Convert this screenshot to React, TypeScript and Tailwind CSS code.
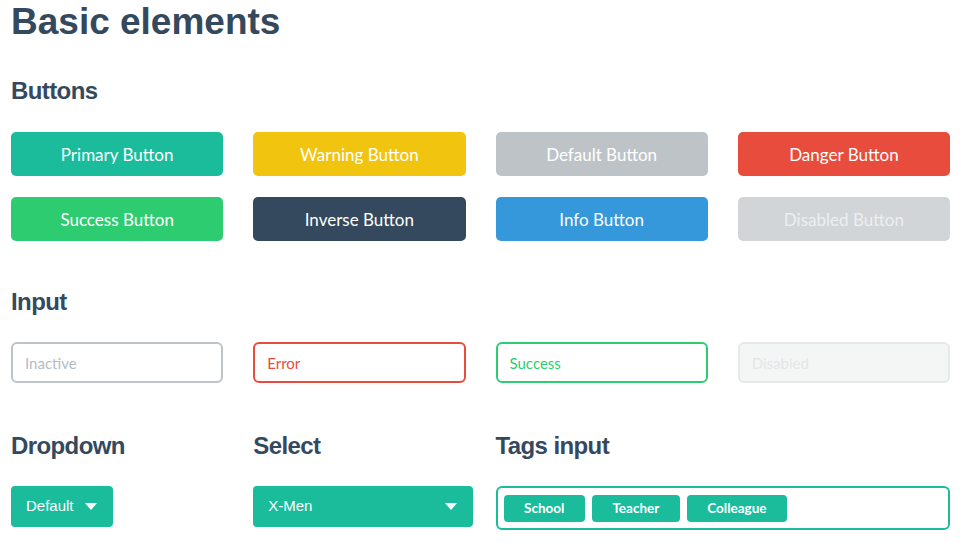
const heading = "font-['Liberation_Sans',Arial,sans-serif] font-bold text-[#34495e] leading-none";

const buttons = [
  { label: 'Primary Button', cls: 'bg-[#1abc9c] text-white' },
  { label: 'Warning Button', cls: 'bg-[#f1c40f] text-white' },
  { label: 'Default Button', cls: 'bg-[#bdc3c7] text-white' },
  { label: 'Danger Button', cls: 'bg-[#e74c3c] text-white' },
  { label: 'Success Button', cls: 'bg-[#2ecc71] text-white' },
  { label: 'Inverse Button', cls: 'bg-[#34495e] text-white' },
  { label: 'Info Button', cls: 'bg-[#3498db] text-white' },
  { label: 'Disabled Button', cls: 'bg-[#d1d5d8] text-[#eceff0]' },
];

const inputs = [
  { ph: 'Inactive', cls: 'border-[#bdc3c7] bg-white placeholder:text-[#b2bcc5]' },
  { ph: 'Error', cls: 'border-[#e74c3c] bg-white placeholder:text-[#e74c3c]' },
  { ph: 'Success', cls: 'border-[#2ecc71] bg-white placeholder:text-[#2ecc71]' },
  { ph: 'Disabled', cls: 'border-[#e6e9e9] bg-[#f4f6f6] placeholder:text-[#e2e6e6]' },
];

const tags = ['School', 'Teacher', 'Colleague'];

function Caret() {
  return (
    <svg width="12" height="7" viewBox="0 0 12 7" className="shrink-0">
      <path d="M0 0h12L6 7z" fill="#ffffff" />
    </svg>
  );
}

export default function App() {
  return (
    <div className="min-h-screen bg-white px-[11px] pt-[3px]">
      <h1 className={`${heading} text-[37px]`}>Basic elements</h1>

      <h2 className={`${heading} mt-[39px] text-[24px] tracking-[-0.6px]`}>Buttons</h2>
      <div className="mt-[29px] grid grid-cols-4 gap-x-[30px] gap-y-[21px]">
        {buttons.map((b) => (
          <button
            key={b.label}
            type="button"
            className={`flex h-[44px] items-center justify-center rounded-[5px] pt-[1px] font-['Lato',sans-serif] text-[17px] ${b.cls}`}
          >
            {b.label}
          </button>
        ))}
      </div>

      <h2 className={`${heading} mt-[49px] text-[24px] tracking-[-0.6px]`}>Input</h2>
      <div className="mt-[28px] grid grid-cols-4 gap-x-[30px]">
        {inputs.map((i) => (
          <input
            key={i.ph}
            placeholder={i.ph}
            className={`h-[41px] w-full rounded-[6px] border-2 px-[12px] font-['Lato',sans-serif] text-[15px] outline-none ${i.cls}`}
          />
        ))}
      </div>

      <div className="mt-[51px] grid grid-cols-4 gap-x-[30px]">
        <div>
          <h2 className={`${heading} text-[24px] tracking-[-0.6px]`}>Dropdown</h2>
          <button
            type="button"
            className="mt-[28px] flex h-[41px] items-center gap-[11px] rounded-[4px] bg-[#1abc9c] pl-[15px] pr-[16px] font-['Liberation_Sans',Arial,sans-serif] text-[15px] text-white"
          >
            Default
            <Caret />
          </button>
        </div>
        <div>
          <h2 className={`${heading} text-[24px] tracking-[-0.6px]`}>Select</h2>
          <div className="mt-[28px] flex h-[41px] w-[220px] items-center justify-between rounded-[4px] bg-[#1abc9c] pl-[15px] pr-[16px] font-['Liberation_Sans',Arial,sans-serif] text-[15px] text-white">
            X-Men
            <Caret />
          </div>
        </div>
        <div className="col-span-2">
          <h2 className={`${heading} text-[24px] tracking-[-0.6px]`}>Tags input</h2>
          <div className="mt-[28px] flex h-[44px] items-center gap-[7px] rounded-[6px] border-2 border-[#1abc9c] px-[6px]">
            {tags.map((t) => (
              <span
                key={t}
                className="flex h-[27px] items-center rounded-[4px] bg-[#1abc9c] px-[20.5px] font-['Lato',sans-serif] text-[13.5px] font-bold text-white"
              >
                {t}
              </span>
            ))}
          </div>
        </div>
      </div>
    </div>
  );
}
